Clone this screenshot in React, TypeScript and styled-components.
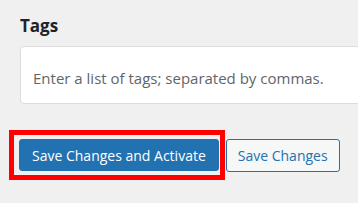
import React from "react";
import styled, { createGlobalStyle } from "styled-components";

const Global = createGlobalStyle`
  html, body { margin: 0; padding: 0; background: #f0f0f1; overflow: hidden; }
  body { font-family: "Open Sans", "Noto Sans", sans-serif; }
`;

const Page = styled.div`
  width: 358px;
  height: 203px;
  overflow: hidden;
  display: flex;
  flex-direction: column;
`;

const Section = styled.div`
  padding: 12px 0 0 20px;
  display: flex;
  flex-direction: column;
`;

const Heading = styled.h2`
  margin: 0;
  font-size: 17px;
  font-weight: 700;
  line-height: 27px;
  color: #1d2327;
`;

const Field = styled.div`
  margin-top: 7px;
  width: 360px;
  height: 58px;
  box-sizing: border-box;
  background: #fff;
  border: 1px solid #dcdcde;
  border-radius: 4px;
  display: flex;
  align-items: center;
  padding: 5px 0 0 12px;
`;

const Placeholder = styled.span`
  font-size: 15px;
  color: #5f656b;
  white-space: nowrap;
`;

const Actions = styled.div`
  margin-top: 26px;
  padding-left: 9px;
  display: flex;
  align-items: center;
  gap: 1px;
`;

const Highlight = styled.div`
  border: 5px solid #ff0000;
  padding: 4px 1px 4px 5px;
  display: flex;
`;

const Button = styled.button<{ $primary?: boolean }>`
  font-family: "Open Sans", "Noto Sans", sans-serif;
  font-size: 14px;
  white-space: nowrap;
  height: ${(p) => (p.$primary ? "32px" : "33px")};
  box-sizing: border-box;
  border-radius: 3px;
  border: 1px solid #2271b1;
  padding: ${(p) => (p.$primary ? "0 12px" : "0 11px")};
  background: ${(p) => (p.$primary ? "#2271b1" : "#f6f7f7")};
  color: ${(p) => (p.$primary ? "#fff" : "#2271b1")};
  cursor: pointer;
`;

export default function App() {
  return (
    <Page>
      <Global />
      <Section>
        <Heading>Tags</Heading>
        <Field>
          <Placeholder>Enter a list of tags; separated by commas.</Placeholder>
        </Field>
      </Section>
      <Actions>
        <Highlight>
          <Button $primary>Save Changes and Activate</Button>
        </Highlight>
        <Button>Save Changes</Button>
      </Actions>
    </Page>
  );
}
